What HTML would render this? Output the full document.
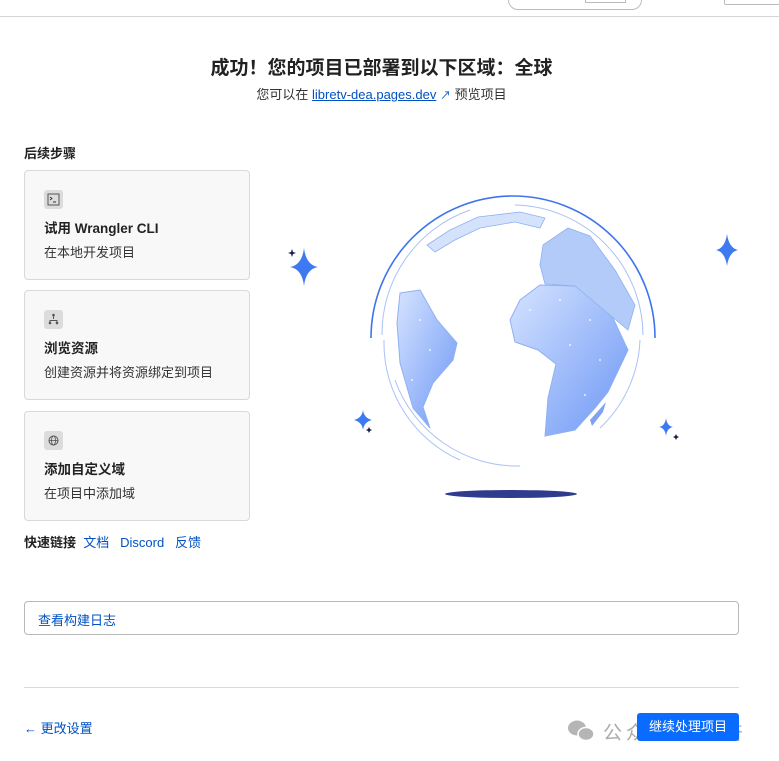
<!DOCTYPE html>
<html><head><meta charset="utf-8"><style>
*{margin:0;padding:0;box-sizing:border-box}
body{width:779px;height:761px;background:#fff;font-family:"Liberation Sans","Noto Sans CJK SC",sans-serif;color:#222;position:relative;overflow:hidden;font-size:13px}
.a{position:absolute}
.card{position:absolute;left:24px;width:226px;height:110px;border:1px solid #d9d9d9;border-radius:4px;background:#f8f8f8}
.ic{position:absolute;left:19px;top:19px;width:19px;height:19px;background:#dcdcdc;border-radius:3px}
.ct{position:absolute;left:19px;top:46px;font-weight:bold;font-size:13.5px}
.cs{position:absolute;left:19px;top:71px;font-size:13px;color:#333}
a,.lk{color:#0051c3;text-decoration:none}
</style></head><body>
<div class="a" style="left:0;top:16px;width:779px;height:1px;background:#d5d5d5"></div>
<div class="a" style="left:508px;top:-10px;width:134px;height:20px;border:1px solid #bbb;border-radius:10px"></div>
<div class="a" style="left:585px;top:-5px;width:41px;height:8px;border:1px solid #bbb"></div>
<div class="a" style="left:724px;top:-10px;width:60px;height:15px;border:1px solid #bbb;border-radius:2px"></div>

<div class="a" style="left:0;top:53px;width:763px;text-align:center;font-size:19px;font-weight:bold;color:#222">成功！您的项目已部署到以下区域：全球</div>
<div class="a" style="left:0;top:84px;width:763px;text-align:center;font-size:13px;color:#333">您可以在 <span class="lk" style="text-decoration:underline">libretv-dea.pages.dev</span> <span class="lk" style="font-size:11px">↗</span> 预览项目</div>

<div class="a" style="left:24px;top:143px;font-weight:bold;font-size:13px">后续步骤</div>
<div class="card" style="top:170px"><div class="ic"><svg width="19" height="19"><rect x="4" y="4" width="11" height="11" fill="none" stroke="#555" stroke-width="1"/><path d="M6 7l2 1.5-2 1.5M9 12h3" stroke="#333" fill="none" stroke-width="0.9"/></svg></div><div class="ct">试用 Wrangler CLI</div><div class="cs">在本地开发项目</div></div>
<div class="card" style="top:290px"><div class="ic"><svg width="19" height="19"><path d="M9.5 5v4M6 13v-2.5h7V13" stroke="#555" fill="none"/><circle cx="9.5" cy="5" r="1.3" fill="#555"/><circle cx="6" cy="13" r="1.3" fill="#555"/><circle cx="13" cy="13" r="1.3" fill="#555"/></svg></div><div class="ct">浏览资源</div><div class="cs">创建资源并将资源绑定到项目</div></div>
<div class="card" style="top:411px"><div class="ic"><svg width="19" height="19"><circle cx="9.5" cy="9.5" r="4.5" fill="none" stroke="#555"/><ellipse cx="9.5" cy="9.5" rx="2" ry="4.5" fill="none" stroke="#555" stroke-width=".8"/><path d="M5 9.5h9" stroke="#555" stroke-width=".8"/></svg></div><div class="ct">添加自定义域</div><div class="cs">在项目中添加域</div></div>
<div class="a" style="left:24px;top:532px;font-size:13px"><b>快速链接</b>&nbsp; <span class="lk">文档</span>&nbsp;&nbsp; <span class="lk">Discord</span>&nbsp;&nbsp; <span class="lk">反馈</span></div>

<svg class="a" style="left:280px;top:190px" width="480" height="320" viewBox="280 190 480 320">
<defs><linearGradient id="g" x1="0" y1="0" x2="1" y2="1"><stop offset="0" stop-color="#d5e3ff"/><stop offset="1" stop-color="#6d97f5"/></linearGradient></defs>
<path d="M371 338 A142 142 0 0 1 655 338" fill="none" stroke="#3e74ee" stroke-width="1.6"/>
<path d="M382 335 A131 131 0 0 1 470 210" fill="none" stroke="#a9c2f7"/>
<path d="M515 205 A131 131 0 0 1 643 335" fill="none" stroke="#a9c2f7"/>
<path d="M384 340 A128 128 0 0 0 460 460" fill="none" stroke="#a9c2f7"/>
<path d="M395 380 A130 130 0 0 0 520 466" fill="none" stroke="#a9c2f7"/>
<path d="M640 340 A128 128 0 0 1 600 428" fill="none" stroke="#a9c2f7"/>
<path d="M427 245 L450 230 L478 217 L520 212 L545 218 L540 228 L515 222 L480 228 L455 240 L435 252 Z" fill="#d5e2fc" stroke="#8fb0f3" stroke-width=".8"/>
<path d="M510 320 L520 300 L540 285 L575 286 L595 300 L613 318 L628 350 L608 392 L595 408 L575 430 L545 436 L548 398 L556 364 L538 350 L515 342 Z" fill="url(#g)" stroke="#8fb0f3"/>
<path d="M543 245 L568 228 L590 236 L615 270 L635 305 L628 330 L610 315 L592 300 L575 286 L545 284 L540 265 Z" fill="#b3cbf9" stroke="#8fb0f3" stroke-width=".8"/>
<path d="M400 293 L420 290 L437 320 L457 343 L453 360 L433 383 L423 407 L430 428 L413 408 L400 363 L397 323 Z" fill="url(#g)" stroke="#8fb0f3"/>
<path d="M590 420 L606 402 L603 412 L592 426Z" fill="#7fa2f3"/>
<g fill="#fff" opacity=".8"><circle cx="530" cy="310" r="1"/><circle cx="560" cy="300" r="1"/><circle cx="590" cy="320" r="1"/><circle cx="570" cy="345" r="1"/><circle cx="600" cy="360" r="1"/><circle cx="585" cy="395" r="1"/><circle cx="420" cy="320" r="1"/><circle cx="430" cy="350" r="1"/><circle cx="412" cy="380" r="1"/></g>
<ellipse cx="511" cy="494" rx="66" ry="4" fill="#2f3b8c"/>
<g fill="#3d7af2">
<path d="M304 248 Q306 265 318 267 Q306 269 304 286 Q302 269 290 267 Q302 265 304 248Z"/>
<path d="M727 234 Q729 248 738 250 Q729 252 727 266 Q725 252 716 250 Q725 248 727 234Z"/>
<path d="M363 410 Q364 418 372 420 Q364 422 363 430 Q362 422 354 420 Q362 418 363 410Z"/>
<path d="M666 418 Q667 426 673 427 Q667 428 666 436 Q665 428 659 427 Q665 426 666 418Z"/>
</g>
<g fill="#1d1d4a">
<path d="M292 249 L293 252 L296 253 L293 254 L292 257 L291 254 L288 253 L291 252Z"/>
<path d="M369 427 L370 429 L372 430 L370 431 L369 433 L368 431 L366 430 L368 429Z"/>
<path d="M676 434 L677 436 L679 437 L677 438 L676 440 L675 438 L673 437 L675 436Z"/>
</g>
</svg>

<div class="a" style="left:24px;top:601px;width:715px;height:34px;border:1px solid #b8b8b8;border-radius:4px"><span class="lk" style="position:absolute;left:13px;top:8px;font-size:13px">查看构建日志</span></div>
<div class="a" style="left:24px;top:687px;width:715px;height:1px;background:#d9d9d9"></div>
<div class="a lk" style="left:24px;top:718px;font-size:13px">← 更改设置</div>
<svg class="a" style="left:567px;top:719px" width="30" height="24"><ellipse cx="10" cy="9" rx="9" ry="7.5" fill="#b5b5b5"/><ellipse cx="19" cy="15" rx="8" ry="6.5" fill="#b5b5b5" stroke="#fff" stroke-width="1.5"/></svg>
<div class="a" style="left:603px;top:718px;font-size:19px;color:#aaa;letter-spacing:4px">公众号 · 勤奋</div>
<div class="a" style="left:637px;top:713px;width:102px;height:28px;background:#0a6cff;border-radius:3px;color:#fff;text-align:center;line-height:27px;font-size:13px">继续处理项目</div>
</body></html>
